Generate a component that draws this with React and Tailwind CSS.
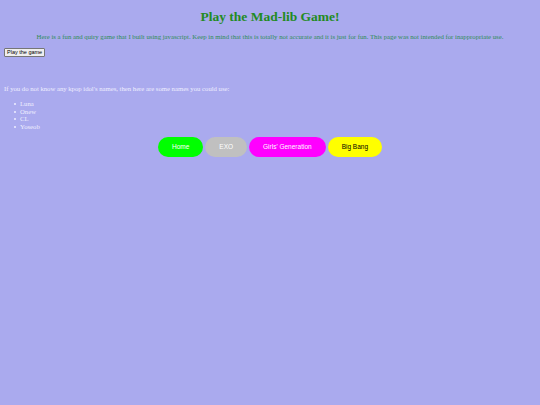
export default function App() {
  const idols = ["Luna", "Onew", "CL", "Yoseob"];
  const links = [
    { label: "Home", cls: "bg-[#00ff00] text-white" },
    { label: "EXO", cls: "bg-[#c0c0c0] text-white" },
    { label: "Girls' Generation", cls: "bg-[#ff00ff] text-white" },
    { label: "Big Bang", cls: "bg-[#ffff00] text-black" },
  ];

  return (
    <div className="min-h-[405px] w-full bg-[#aaaaee] px-[4px] pt-[8px] font-['Liberation_Serif',serif]">
      <h1 className="text-center text-[13.5px] font-bold leading-[18px] text-[#228b22]">
        Play the Mad-lib Game!
      </h1>
      <p className="mt-[7px] text-center text-[6.75px] leading-[8px] text-[#2e8b57]">
        Here is a fun and quiry game that I built using javascript. Keep in mind that this is totally not accurate and it is just for fun. This page was not intended for inappropriate use.
      </p>
      <button className="mt-[7px] block h-[9px] rounded-[1px] border border-[#767676] bg-[#efefef] px-[2px] text-[5.5px] leading-[7px] font-['Liberation_Sans',sans-serif] text-black">
        Play the game
      </button>

      <p className="mt-[28px] text-[6.7px] leading-[8px] text-[#eeeeff]">
        If you do not know any kpop idol's names, then here are some names you could use:
      </p>
      <ul className="mt-[7px] pl-[10px] text-[6.7px] leading-[7.7px] text-[#eeeeff]">
        {idols.map((name) => (
          <li key={name} className="flex items-center">
            <span className="size-[2px] rounded-full bg-[#eeeeff]" />
            <span className="ml-[4px]">{name}</span>
          </li>
        ))}
      </ul>

      <div className="mt-[6px] flex justify-center gap-[2px] font-['Liberation_Sans',sans-serif]">
        {links.map((l) => (
          <a
            key={l.label}
            className={`flex h-[20px] items-center rounded-full px-[14px] text-[6.5px] ${l.cls}`}
          >
            {l.label}
          </a>
        ))}
      </div>
    </div>
  );
}
